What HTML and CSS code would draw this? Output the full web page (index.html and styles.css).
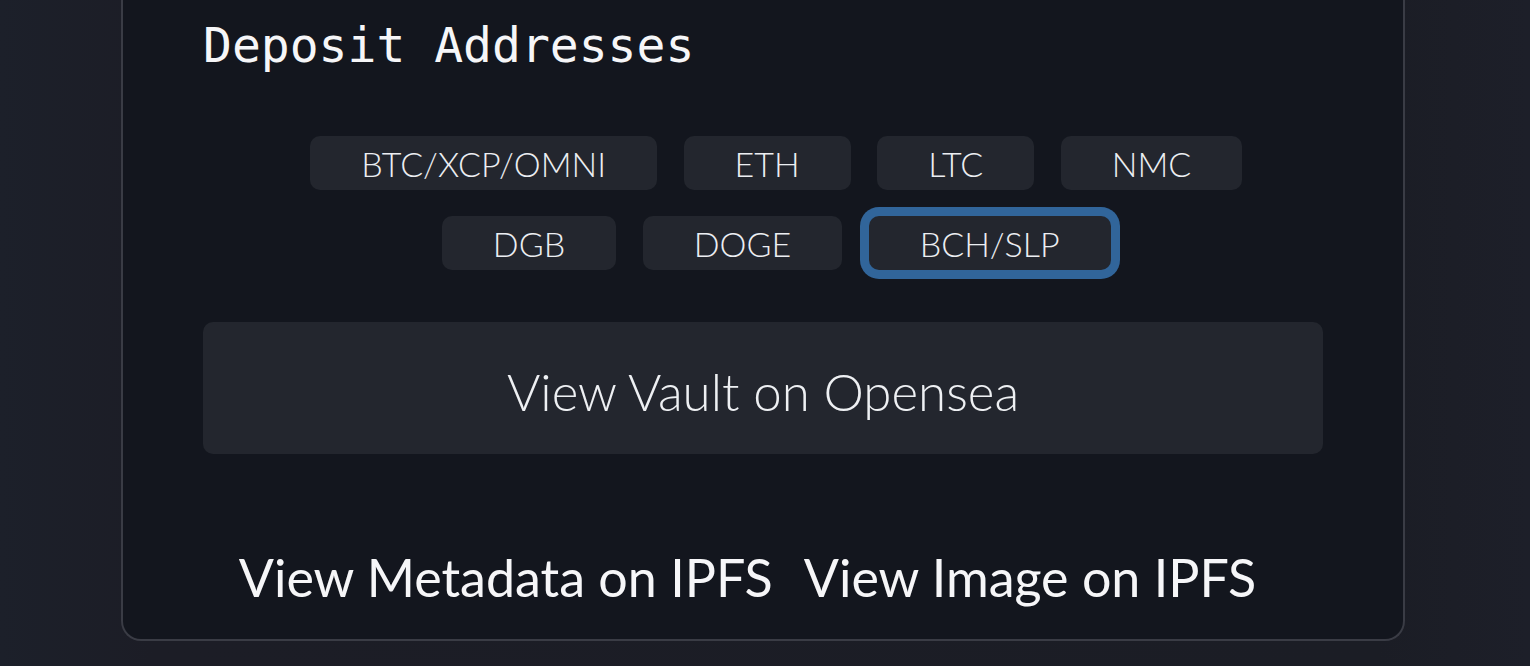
FILE: index.html
```html
<!DOCTYPE html>
<html lang="en">
<head>
<meta charset="utf-8">
<title>Deposit Addresses</title>
<link rel="stylesheet" href="styles.css">
</head>
<body>
<div class="page">
  <section class="card">
    <h2 class="title">Deposit Addresses</h2>
    <div class="chains">
      <div class="chain-row">
        <button class="chain">BTC/XCP/OMNI</button>
        <button class="chain">ETH</button>
        <button class="chain">LTC</button>
        <button class="chain">NMC</button>
      </div>
      <div class="chain-row">
        <button class="chain">DGB</button>
        <button class="chain">DOGE</button>
        <button class="chain chain-active">BCH/SLP</button>
      </div>
    </div>
    <button class="opensea">View Vault on Opensea</button>
    <div class="links">
      <a class="link" href="#">View Metadata on IPFS</a>
      <a class="link" href="#">View Image on IPFS</a>
    </div>
  </section>
</div>
</body>
</html>
```

FILE: styles.css
```css
html, body {
  margin: 0;
  padding: 0;
}
body {
  background: #1c1e28;
  background-image: linear-gradient(90deg, #1c202a 0%, #1c1d26 10%, #1b1d25 90%, #1d1f29 100%);
  font-family: "Lato", "Open Sans", sans-serif;
  color: #f4f4f6;
  height: 666px;
  overflow: hidden;
}
.page {
  padding: 0 125px 25px 121px;
  height: 666px;
  box-sizing: border-box;
  display: flex;
  flex-direction: column;
  justify-content: flex-end;
}
.card {
  background: #13161e;
  border: 2px solid #3a3c45;
  border-top: none;
  border-radius: 0 0 20px 20px;
  padding: 0 80px 0 80px;
  height: 641px;
  box-sizing: border-box;
  display: flex;
  flex-direction: column;
}
.title {
  font-family: "DejaVu Sans Mono", "Liberation Mono", monospace;
  font-weight: normal;
  font-size: 48px;
  line-height: 56px;
  margin: 17px 0 0 0;
  color: #f6f6f8;
  letter-spacing: 0;
}
.chains {
  margin-top: 63px;
  display: flex;
  flex-direction: column;
  gap: 26px;
}
.chain-row {
  display: flex;
  justify-content: center;
}
.chain {
  margin-left: 26.5px;
  height: 54px;
  padding: 2px 51px 0 51px;
  border: none;
  border-radius: 10px;
  background: #23262e;
  color: #eceef2;
  font-family: "Lato", "Open Sans", sans-serif;
  font-weight: 300;
  font-size: 34px;
  line-height: 52px;
}
.chain-active {
  box-shadow: 0 0 0 9px #31659a;
}
.opensea {
  margin-top: 52px;
  height: 132px;
  width: 100%;
  border: none;
  border-radius: 10px;
  background: #23262e;
  color: #eef0f3;
  font-family: "Lato", "Open Sans", sans-serif;
  font-weight: 300;
  font-size: 51px;
  padding: 6px 0 0 0;
}
.links {
  margin-top: 93px;
  display: flex;
  justify-content: center;
}
.link {
  margin-right: 31px;
  color: #f6f6f8;
  text-decoration: none;
  font-family: "Lato", "Open Sans", sans-serif;
  font-size: 52px;
  line-height: 60px;
}
```
